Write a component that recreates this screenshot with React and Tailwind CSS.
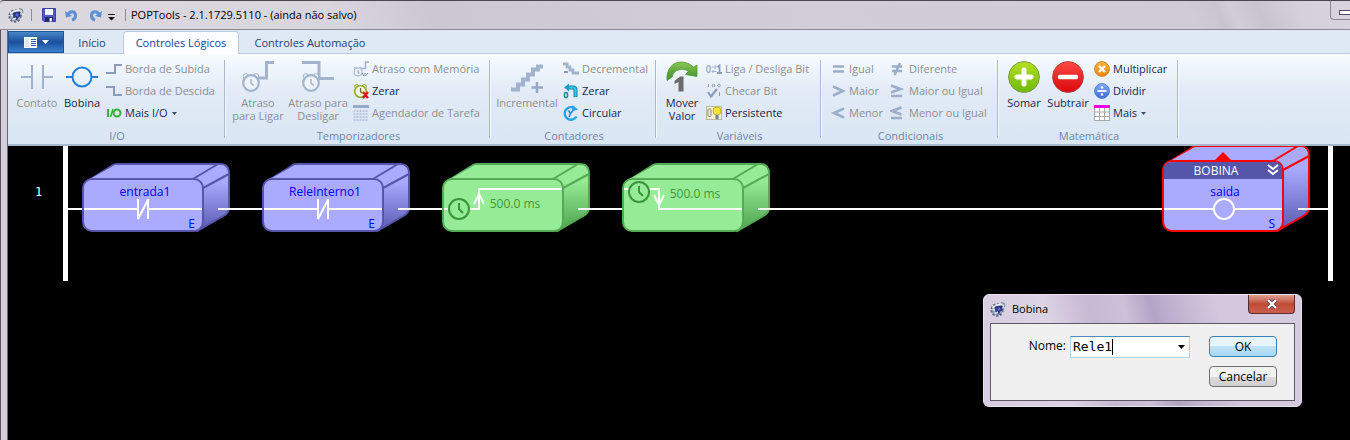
import React, { useState } from "react";

const MUTED = "#a3b3cd";

/* ---------- small drawings ---------- */

function Svg({ size = 16, children }) {
  return (
    <svg
      width={size}
      height={size}
      viewBox={`0 0 ${size} ${size}`}
      className="block shrink-0"
      fill="none"
      aria-hidden="true"
    >
      {children}
    </svg>
  );
}

const AppLogo = () => (
  <Svg>
    <circle cx="7" cy="9" r="5.5" fill="#8f9ab4" />
    <circle cx="7" cy="9" r="5.8" stroke="#5d6883" strokeWidth="1.8" strokeDasharray="2.2 1.6" />
    <path d="M5 5.5L12 4.5L12.5 9L9 13L5.5 11Z" fill="#2b3370" />
    <path d="M2.5 7Q5.5 3 12 3.5" stroke="#eef3f8" strokeWidth="1.6" />
    <path d="M2.500 8.500L5 9" stroke="#e8eef5" strokeWidth="1.4" />
    <circle cx="9" cy="8" r="1.7" fill="#5560e8" />
    <path d="M11 2Q15.500 1.500 14.5 6" stroke="#6f9a96" strokeWidth="1.2" />
    <path d="M4.500 12.500L8 11" stroke="#dbe3f0" strokeWidth="1.4" />
    <path d="M10 12L12 10" stroke="#a4b0c6" strokeWidth="1.4" />
  </Svg>
);

const SaveIcon = () => (
  <Svg>
    <path d="M1.500 1.500H14.500V14.500H3L1.500 13Z" fill="#5059c8" stroke="#3a429e" />
    <rect x="4" y="2" width="8" height="6" fill="#f2f5ff" />
    <rect x="4" y="10" width="8" height="4.500" fill="#22285e" />
    <rect x="8.500" y="11" width="2.500" height="3.500" fill="#e8ecff" />
  </Svg>
);

const UndoIcon = ({ flip }) => (
  <Svg>
    <g transform={flip ? "translate(16 0) scale(-1 1)" : undefined}>
      <path d="M4 7.500C6 3.500 11.500 4 11.500 8.500C11.500 11 10 12.500 8 13" stroke="#5b8fd6" strokeWidth="3" />
      <path d="M1 4L2 10.500L8 9Z" fill="#5b8fd6" />
    </g>
  </Svg>
);

const ContactIcon = () => (
  <Svg size={32}>
    <path d="M0 16H11M22 16H32" stroke={MUTED} strokeWidth="2" />
    <path d="M11 4V28M22 4V28" stroke={MUTED} strokeWidth="2" />
  </Svg>
);

const CoilIcon = () => (
  <Svg size={32}>
    <path d="M0 16H7M25 16H32" stroke="#1f7fdc" strokeWidth="2" />
    <circle cx="16" cy="16" r="9.500" stroke="#1f7fdc" strokeWidth="2" />
  </Svg>
);

const EdgeUp = () => (
  <Svg>
    <path d="M0 12H9V4H16" stroke="#8b9cba" strokeWidth="2" />
  </Svg>
);
const EdgeDown = () => (
  <Svg>
    <path d="M0 4H8V12H16" stroke="#8b9cba" strokeWidth="2" />
  </Svg>
);
const MoreIO = () => (
  <Svg>
    <path d="M2 4V12" stroke="#35b335" strokeWidth="2" />
    <path d="M4.5 12L7 4" stroke="#35b335" strokeWidth="1.6" />
    <circle cx="11" cy="8" r="3.5" stroke="#35b335" strokeWidth="2" />
  </Svg>
);

function Clock({ x, y, r, line = "#a3b3cd", face = "#eef3fa" }) {
  return (
    <g>
      <circle cx={x - r * 0.65} cy={y - r * 0.85} r={r * 0.35} fill={face} stroke={line} />
      <circle cx={x + r * 0.65} cy={y - r * 0.85} r={r * 0.35} fill={face} stroke={line} />
      <circle cx={x} cy={y} r={r} fill={face} stroke={line} strokeWidth={r * 0.28} />
      <path d={`M${x} ${y - r * 0.5}V${y}L${x + r * 0.35} ${y + r * 0.35}`} stroke={line} strokeWidth="1.4" />
    </g>
  );
}

const DelayOn = () => (
  <Svg size={32}>
    <path d="M16 17H24.500V1.500H32" stroke={MUTED} strokeWidth="3" />
    <Clock x={9} y={22} r={7.8} />
  </Svg>
);
const DelayOff = () => (
  <Svg size={32}>
    <path d="M0 1.500H17V17.500H32" stroke={MUTED} strokeWidth="3" />
    <Clock x={9} y={22} r={7.8} />
  </Svg>
);
const DelayMem = () => (
  <Svg>
    <path d="M8 7.500H12.500V1H16" stroke={MUTED} strokeWidth="1.6" />
    <Clock x={5} y={11} r={4} />
    <path d="M9 12L11 15M12 12V15M15 12L12.5 15" stroke="#7f8fac" />
  </Svg>
);
const ResetClock = () => (
  <Svg>
    <Clock x={7.5} y={8.5} r={5.8} line="#93ad2e" face="#f5f8dc" />
    <path d="M7.5 5V9L9 10" stroke="#5b6b34" />
    <path d="M10 9L15 15M15 9L10 15" stroke="#e01818" strokeWidth="2.2" />
  </Svg>
);
const Scheduler = () => (
  <Svg>
    <rect x="0" y="0" width="16" height="3" fill="#98a9c5" />
    <path d="M1.5 5V16M4.5 5V16M7.5 5V16M10.5 5V16M13.5 5V16" stroke="#b9c5da" strokeWidth="2" strokeDasharray="2 1" />
  </Svg>
);
const StairsUp = () => (
  <Svg size={32}>
    <path d="M0 28.500H7V23.500H12V18.500H17V13.500H22V8.500H27V5.500H32" stroke={MUTED} strokeWidth="4" />
    <path d="M26 21V32M20.500 26.500H32" stroke="#98a8c3" strokeWidth="2.5" />
  </Svg>
);
const StairsDown = () => (
  <Svg>
    <path d="M0 3H4V6H7V9H10V12H16" stroke={MUTED} strokeWidth="2.8" />
    <path d="M1 11H5" stroke="#8b9cba" strokeWidth="2" />
  </Svg>
);
const ResetCounter = () => (
  <Svg>
    <path d="M5 4.5H10Q12.500 4.5 12.500 7V14" stroke="#1689ad" strokeWidth="4" />
    <path d="M5 4.5H10Q12.500 4.5 12.500 7V13.500" stroke="#38c4e8" strokeWidth="2" />
    <path d="M1 4.5L6 0.5V8.5Z" fill="#1f9dc0" />
    <ellipse cx="3" cy="12" rx="1.6" ry="2.6" stroke="#178f95" strokeWidth="1.5" />
  </Svg>
);
const Circular = () => (
  <Svg>
    <path d="M12 3.5A6.3 6.3 0 1 0 13.5 11.5" stroke="#24a4ea" strokeWidth="2.4" />
    <path d="M9.5 0L15 4.5L9 6.5Z" fill="#24a4ea" />
    <path d="M5.5 5.5L7.5 8.5L10 5.5M7.5 8.5L6 12" stroke="#2b86cf" strokeWidth="1.6" />
  </Svg>
);
const MoveIcon = () => (
  <Svg size={32}>
    <defs>
      <linearGradient id="mv" x1="0" x2="0" y1="0" y2="1">
        <stop offset="0" stopColor="#8cc653" />
        <stop offset="1" stopColor="#3b8a2b" />
      </linearGradient>
    </defs>
    <path
      d="M1 19.500C0 8 7 1 15 1C20 1 24.500 3 27.500 6L31 4V15.500L19.500 13.500L22.500 10.500C17 6.500 8 8 6 16Z"
      fill="url(#mv)"
      stroke="#4d9a3a"
      strokeWidth="0.8"
    />
    <path d="M8.500 20L14 15.500H17.500V30.500H12.500V21L8.500 23Z" fill="#6b6b6b" />
  </Svg>
);
const ToggleBit = () => (
  <Svg>
    <ellipse cx="2.5" cy="8" rx="1.8" ry="3.5" stroke={MUTED} strokeWidth="1.4" />
    <path d="M5.500 6H10M8.500 4L10.500 6L8.500 8M10.500 10.500H6M7.500 9L6 10.500L7.500 12" stroke={MUTED} />
    <path d="M11.500 6L13.500 4.500V12M11 12H16" stroke="#8b9cba" strokeWidth="1.8" />
  </Svg>
);
const CheckBit = () => (
  <Svg>
    <path d="M2.500 1V4" stroke="#8b9cba" />
    <circle cx="7.500" cy="2.500" r="1.300" stroke="#8b9cba" />
    <circle cx="13" cy="2.500" r="1.300" stroke="#8b9cba" />
    <path d="M2 9L5 13.500L11 6" stroke="#8b9cba" strokeWidth="2.2" />
    <path d="M13.500 9V13" stroke="#8b9cba" />
  </Svg>
);
const Persistent = () => (
  <Svg>
    <rect x="0.5" y="1.500" width="15" height="13" fill="#f3f0d2" stroke="#b9b9a0" />
    <rect x="2" y="4" width="3" height="7.500" rx="1" stroke="#8a8a75" />
    <circle cx="11" cy="6" r="4" fill="#f3e23c" stroke="#c6b422" />
    <rect x="9.500" y="10" width="3" height="4" fill="#70809c" />
  </Svg>
);

const CMP = {
  eq: "M3 5.500H14M3 10.500H14",
  gt: "M3 3.500L13 8L3 12.500",
  lt: "M14 3.500L4 8L14 12.500",
  ne: "M2 5.500H12M2 10H12M10 2L4.500 14",
  ge: "M1 2.500L10.500 6L1 9.500M1 13H12",
  le: "M11.500 2.500L2 6L11.500 9.500M1 13H12",
};
const Compare = ({ kind }) => (
  <Svg>
    <path d={CMP[kind]} stroke="#9dadca" strokeWidth="2.6" />
  </Svg>
);

function Ball({ size, a, b, edge, id, children }) {
  const c = size / 2;
  return (
    <Svg size={size}>
      <defs>
        <linearGradient id={id} x1="0" x2="0" y1="0" y2="1">
          <stop offset="0" stopColor={a} />
          <stop offset="1" stopColor={b} />
        </linearGradient>
      </defs>
      <circle cx={c} cy={c} r={c - 0.6} fill={`url(#${id})`} stroke={edge} strokeWidth="1" />
      {children}
    </Svg>
  );
}
const Plus = () => (
  <Ball size={32} id="ball-plus" a="#b4e01e" b="#6fb90c" edge="#7a9a44">
    <path d="M16 9V23M9 16H23" stroke="#fff" strokeWidth="5" strokeLinecap="round" />
  </Ball>
);
const Minus = () => (
  <Ball size={32} id="ball-minus" a="#ff4a44" b="#d8060c" edge="#b44040">
    <path d="M8 16H24" stroke="#fff" strokeWidth="4.500" strokeLinecap="round" />
  </Ball>
);
const Times = () => (
  <Ball size={16} id="ball-times" a="#ffb43c" b="#f08206" edge="#cf8a30">
    <path d="M5 5L11 11M11 5L5 11" stroke="#fff" strokeWidth="2.400" />
  </Ball>
);
const Divide = () => (
  <Ball size={16} id="ball-divide" a="#86aef5" b="#3a6ae0" edge="#5b7fd0">
    <path d="M3.500 8H12.500" stroke="#fff" strokeWidth="1.800" />
    <circle cx="8" cy="4.500" r="1.200" fill="#fff" />
    <circle cx="8" cy="11.500" r="1.200" fill="#fff" />
  </Ball>
);
const TableIcon = () => (
  <Svg>
    <rect x="0.500" y="2.500" width="15" height="13" fill="#fff" stroke="#a9a9a9" />
    <path d="M5.500 3V16M10.500 3V16M0 7H16M0 11.500H16" stroke="#a9a9a9" />
    <rect x="0" y="0" width="16" height="3" fill="#f000e0" />
  </Svg>
);

const Caret = () => (
  <svg width="5" height="3" viewBox="0 0 5 3" className="ml-1 block" aria-hidden="true">
    <path d="M0 0H5L2.500 3Z" fill="#3c4a6a" />
  </svg>
);

/* ---------- ribbon ---------- */

function Big({ icon, lines, off, width }) {
  return (
    <button
      type="button"
      disabled={off}
      className={`flex shrink-0 flex-col items-center pt-[3px] text-[11px] leading-[13px] text-[#15294f] disabled:text-[#8d8f94] ${width}`}
    >
      {icon}
      <span className="mt-[3px] whitespace-nowrap">
        {lines.map((l) => (
          <span key={l} className="block">
            {l}
          </span>
        ))}
      </span>
    </button>
  );
}

function Small({ icon, label, off, menu }) {
  return (
    <button
      type="button"
      disabled={off}
      className="flex h-[22px] items-center text-[11px] whitespace-nowrap text-[#15294f] disabled:text-[#8d8f94]"
    >
      {icon}
      <span className="ml-[3px]">{label}</span>
      {menu && <Caret />}
    </button>
  );
}

const Stack = ({ children, className = "" }) => (
  <div className={`flex flex-col ${className}`}>{children}</div>
);

function Group({ title, width, children }) {
  return (
    <section
      aria-label={title}
      className={`relative flex h-full shrink-0 flex-col ${width}`}
    >
      <div className="flex h-[70px] pt-1">{children}</div>
      <h2 className="mt-1 text-center text-[11px] leading-4 text-[#7486a6]">{title}</h2>
      <span className="absolute top-1.5 right-0 h-[78px] w-0.5 border-l border-[#a9b9d3] bg-[#f6faff]" />
    </section>
  );
}

function Ribbon() {
  return (
    <div className="flex h-[92px] overflow-hidden border-b-2 border-[#a5b8cc] bg-linear-to-b from-[#f7fcff] via-[#e2ebf6] via-40% to-[#dae6f4]">
      <Group title="I/O" width="w-[218px]">
        <Big icon={<ContactIcon />} lines={["Contato"]} off width="ml-1.5 w-[46px]" />
        <Big icon={<CoilIcon />} lines={["Bobina"]} width="w-11" />
        <Stack className="ml-0.5">
          <Small icon={<EdgeUp />} label="Borda de Subida" off />
          <Small icon={<EdgeDown />} label="Borda de Descida" off />
          <Small icon={<MoreIO />} label="Mais I/O" menu />
        </Stack>
      </Group>
      <Group title="Temporizadores" width="w-[265px]">
        <Big icon={<DelayOn />} lines={["Atraso", "para Ligar"]} off width="ml-1 w-[56px]" />
        <Big icon={<DelayOff />} lines={["Atraso para", "Desligar"]} off width="w-[64px]" />
        <Stack className="ml-[3px]">
          <Small icon={<DelayMem />} label="Atraso com Memória" off />
          <Small icon={<ResetClock />} label="Zerar" />
          <Small icon={<Scheduler />} label="Agendador de Tarefa" off />
        </Stack>
      </Group>
      <Group title="Contadores" width="w-[166px]">
        <Big icon={<StairsUp />} lines={["Incremental"]} off width="ml-1 w-[64px]" />
        <Stack className="ml-1">
          <Small icon={<StairsDown />} label="Decremental" off />
          <Small icon={<ResetCounter />} label="Zerar" />
          <Small icon={<Circular />} label="Circular" />
        </Stack>
      </Group>
      <Group title="Variáveis" width="w-[165px]">
        <Big icon={<MoveIcon />} lines={["Mover", "Valor"]} width="ml-[3px] w-11" />
        <Stack className="ml-0.5">
          <Small icon={<ToggleBit />} label="Liga / Desliga Bit" off />
          <Small icon={<CheckBit />} label="Checar Bit" off />
          <Small icon={<Persistent />} label="Persistente" />
        </Stack>
      </Group>
      <Group title="Condicionais" width="w-[177px]">
        <Stack className="ml-2 w-[60px]">
          <Small icon={<Compare kind="eq" />} label="Igual" off />
          <Small icon={<Compare kind="gt" />} label="Maior" off />
          <Small icon={<Compare kind="lt" />} label="Menor" off />
        </Stack>
        <Stack>
          <Small icon={<Compare kind="ne" />} label="Diferente" off />
          <Small icon={<Compare kind="ge" />} label="Maior ou Igual" off />
          <Small icon={<Compare kind="le" />} label="Menor ou Igual" off />
        </Stack>
      </Group>
      <Group title="Matemática" width="w-[180px]">
        <Big icon={<Plus />} lines={["Somar"]} width="ml-1 w-[42px]" />
        <Big icon={<Minus />} lines={["Subtrair"]} width="w-[46px]" />
        <Stack className="ml-[3px]">
          <Small icon={<Times />} label="Multiplicar" />
          <Small icon={<Divide />} label="Dividir" />
          <Small icon={<TableIcon />} label="Mais" menu />
        </Stack>
      </Group>
    </div>
  );
}

/* ---------- window chrome ---------- */

function TitleBar() {
  return (
    <header className="flex h-[30px] items-center rounded-tl border-t border-b border-t-[#4c4650] border-b-[#8a8890] bg-[linear-gradient(65deg,#dcd8e0_0%,#d9d5dd_25%,#cdc7d2_32%,#d3cdd9_60%,#d1cbd6_88%,#cac4cf_90%,#d3cdd8_91%,#c9c3ce_93%,#d6d0db_96%,#d9d3de_100%)] pl-2">
      <AppLogo />
      <span className="ml-[7px] h-3 w-px bg-[#8f8b96]" />
      <div className="ml-[9px] flex items-center gap-[7px]">
        <button type="button" aria-label="Salvar"><SaveIcon /></button>
        <button type="button" aria-label="Desfazer"><UndoIcon /></button>
        <button type="button" aria-label="Refazer"><UndoIcon flip /></button>
      </div>
      <button type="button" aria-label="Personalizar" className="mt-1 ml-[5px]">
        <svg width="7" height="7" viewBox="0 0 7 7" className="block">
          <path d="M0 0H7V1H0ZM0 3H7L3.500 6.500Z" fill="#111" />
        </svg>
      </button>
      <span className="ml-[10px] h-3 w-px bg-[#8f8b96]" />
      <h1 className="ml-[5px] text-[11px] whitespace-nowrap text-black">
        POPTools - 2.1.1729.5110 - (ainda não salvo)
      </h1>
      <button
        type="button"
        aria-label="Minimizar"
        className="ml-auto flex h-[19px] w-5 items-center justify-end self-start rounded-bl border-b border-l border-[#8a8890] pt-1"
      >
        <span className="h-[5px] w-[11px] border border-r-0 border-[#4f4c66] bg-white" />
      </button>
    </header>
  );
}

function Tabs() {
  return (
    <nav className="flex h-6 border-b border-[#bdcbe2] bg-[#dfe9f5] text-[11px] text-[#1e3f73]">
      <button
        type="button"
        aria-label="Menu"
        className="mt-px flex w-14 items-center justify-center gap-[5px] border border-[#1d5592] bg-linear-to-b from-[#4a86c8] via-[#1b4f9c] via-50% to-[#3a83cf]"
      >
        <svg width="13" height="11" viewBox="0 0 13 11" className="block">
          <rect width="13" height="11" fill="#fff" />
          <rect x="1" y="1" width="4" height="9" fill="#dfe7f1" />
          <path d="M7 2.500H12M7 4.500H12M7 6.500H12M7 8.500H12" stroke="#2c5ea8" />
        </svg>
        <svg width="7" height="4" viewBox="0 0 7 4" className="block">
          <path d="M0 0H7L3.500 4Z" fill="#fff" />
        </svg>
      </button>
      <button type="button" className="mr-[3px] w-14 pt-[3px] text-center">Início</button>
      <button
        type="button"
        aria-current="page"
        className="mt-px -mb-px w-[116px] rounded-t border border-b-0 border-[#bdcbe2] bg-[#fbfdff] text-center text-[#1543a0]"
      >
        Controles Lógicos
      </button>
      <button type="button" className="w-[142px] pt-[3px] text-center">Controles Automação</button>
    </nav>
  );
}

/* ---------- ladder diagram ---------- */

const SKINS = {
  blue: { fill: "#aaaaff", edge: "#5555aa", dark: "#5a5ab0" },
  green: { fill: "#96eb96", edge: "#55aa55", dark: "#4fa34f" },
  red: { fill: "#aaaaff", edge: "#ff0000", dark: "#5a5ab0" },
};

function Block({ skin, top = 17, id, wireEnd = 180, children }) {
  const s = SKINS[skin];
  const back = top - 15;
  return (
    <svg
      width={wireEnd}
      height="90"
      viewBox={`0 -16 ${wireEnd} 90`}
      className="block shrink-0 text-[12px]"
      fill="none"
    >
      <defs>
        <linearGradient id={id} x1="0" x2="0" y1="0" y2="1">
          <stop offset="0.25" stopColor={s.fill} />
          <stop offset="1" stopColor={s.dark} />
        </linearGradient>
      </defs>
      <path
        d={`M7 ${top + 1}L31 ${back + 1}Q33 ${back} 36 ${back}H138Q147 ${back} 147 ${back + 10}V46Q147 50 143 53L115 69Z`}
        fill={`url(#${id})`}
        stroke={s.edge}
        strokeWidth="2"
      />
      <path
        d={`M8 ${top}L33 ${back + 1}H138Q146 ${back + 1} 146 ${back + 10}L121 ${top + 10}L112 ${top}Z`}
        fill={s.fill}
      />
      <path d={`M111 ${top}L136 ${back}M121 ${top + 9}L147 ${back + 10}`} stroke={s.edge} strokeWidth="2" />
      <rect x="1" y={top} width="120" height={69 - top} rx="9" fill={s.fill} stroke={s.edge} strokeWidth="2" />
      <path d={`M136 47H${wireEnd}`} stroke="#fff" strokeWidth="2" />
      {children}
    </svg>
  );
}

function Contact({ name, id }) {
  return (
    <Block skin="blue" id={id}>
      <text x="63" y="34" textAnchor="middle" fill="#0000ff">{name}</text>
      <text x="113" y="66" textAnchor="end" fill="#0000ff">E</text>
      <path d="M2 47H56M66 47H120M56 37V57M66 37V57M56 57L66 38" stroke="#fff" strokeWidth="2" />
    </Block>
  );
}

function Timer({ rising, id }) {
  const y = rising ? 47 : 30;
  return (
    <Block skin="green" id={id}>
      <path
        d={
          rising
            ? "M2 47H7M27 47H37V27H120M32 42L37 32L42 42"
            : "M2 27H7M27 27H37V47H120M32 33L37 43L42 33"
        }
        stroke="#fff"
        strokeWidth="2"
      />
      <circle cx="17" cy={y} r="10" fill="#96eb96" stroke="#3a963a" strokeWidth="2" />
      <path d={`M17 ${y - 6}V${y}L21 ${y + 4}`} stroke="#3a963a" strokeWidth="2" />
      <text x="73" y={rising ? 46 : 36} textAnchor="middle" fill="#3f973f">500.0 ms</text>
    </Block>
  );
}

function Coil() {
  return (
    <Block skin="red" top={-1} id="side-coil" wireEnd={166}>
      <path d="M2 17V8Q2 0 10 0H112Q120 0 120 8V17Z" fill="#5555aa" />
      <path d="M52 -1L61 -10L70 -1Z" fill="#ff0000" />
      <text x="54" y="13" textAnchor="middle" fill="#fff">BOBINA</text>
      <path d="M106 3L111 7L116 3M106 8L111 12L116 8" stroke="#fff" strokeWidth="2" />
      <text x="63" y="34" textAnchor="middle" fill="#0000ff">saida</text>
      <text x="113" y="66" textAnchor="end" fill="#0000ff">S</text>
      <path d="M2 47H52M72 47H120" stroke="#fff" strokeWidth="2" />
      <circle cx="62" cy="47" r="10" stroke="#fff" strokeWidth="2" />
    </Block>
  );
}

const Wire = ({ className }) => <span className={`mt-[62px] h-0.5 bg-white ${className}`} />;
const Rail = () => <span className="h-[135px] w-[5px] shrink-0 bg-white" />;

function Ladder() {
  return (
    <div className="flex pr-[17px]">
      <span className="w-[55px] shrink-0 pt-[38px] pl-[27px] font-['DejaVu_Sans_Mono',monospace] text-[12px] leading-4 text-white">1</span>
      <Rail />
      <Wire className="w-[14px] shrink-0" />
      <Contact name="entrada1" id="side-a" />
      <Contact name="ReleInterno1" id="side-b" />
      <Timer rising id="side-c" />
      <Timer id="side-d" />
      <Wire className="flex-1" />
      <Coil />
      <Rail />
    </div>
  );
}

/* ---------- dialog ---------- */

function CoilDialog() {
  const [name, setName] = useState("Rele1");
  return (
    <div
      role="dialog"
      aria-label="Bobina"
      className="absolute top-[294px] right-12 w-[319px] rounded-md border border-[#e9e2f0] bg-[linear-gradient(75deg,#d6cbe0_0%,#dcd3e5_25%,#c6b9d3_38%,#cdc0d9_48%,#b3a4c4_56%,#c0b2cf_62%,#d3c8de_75%,#d6cce0_100%)] px-1.5 pb-[5px]"
    >
      <div className="flex h-7 items-center">
        <AppLogo />
        <h2 className="ml-1.5 text-[11px] text-black">Bobina</h2>
        <button
          type="button"
          aria-label="Fechar"
          className="ml-auto flex h-[19px] w-[47px] items-center justify-center self-start rounded-b border border-t-0 border-[#5b2a30] bg-linear-to-b from-[#dba095] via-[#c04a36] via-50% to-[#c9604c]"
        >
          <svg width="12" height="10" viewBox="0 0 12 10" className="block">
            <path d="M2 1L10 9M10 1L2 9" stroke="#55484f" strokeWidth="4" />
            <path d="M2 1L10 9M10 1L2 9" stroke="#fff" strokeWidth="2.200" />
          </svg>
        </button>
      </div>
      <form
        className="flex h-[78px] items-start justify-end border border-[#5d5766] bg-[#f0f0f0] pt-3 pr-[17px] text-[12px] text-black"
        onSubmit={(e) => e.preventDefault()}
      >
        <label htmlFor="coil-name" className="mr-1 leading-5">Nome:</label>
        <div className="flex h-[22px] w-[120px] items-center border border-[#b5d3e8] border-t-[#4f8db8] bg-white">
          <input
            id="coil-name"
            value={name}
            onChange={(e) => setName(e.target.value)}
            size={5}
            className="field-sizing-content min-w-0 pl-0.5 font-['DejaVu_Sans_Mono',monospace] text-[13px] leading-4 outline-none"
          />
          <span className="h-4 w-px bg-black" />
          <button type="button" aria-label="Abrir lista" className="ml-auto px-1">
            <svg width="7" height="4" viewBox="0 0 7 4" className="block">
              <path d="M0 0H7L3.500 4Z" fill="#000" />
            </svg>
          </button>
        </div>
        <div className="ml-[19px] flex w-[68px] flex-col gap-[9px]">
          <button
            type="submit"
            className="h-[21px] rounded-sm border border-[#3c7fb1] bg-linear-to-b from-[#e6f4fc] from-50% via-[#bfe3f8] via-50% to-[#a5d8f5] leading-[18px]"
          >
            OK
          </button>
          <button
            type="button"
            className="h-[21px] rounded-sm border border-[#707070] bg-linear-to-b from-[#f2f2f2] from-50% via-[#dddddd] via-50% to-[#cfcfcf] leading-[18px]"
          >
            Cancelar
          </button>
        </div>
      </form>
    </div>
  );
}

export default function App() {
  return (
    <div className="relative flex min-h-screen flex-col overflow-hidden bg-[#d5cedb] font-['Open_Sans','Noto_Sans',sans-serif]">
      <TitleBar />
      <main className="flex flex-1 flex-col border-l border-[#5c5662] pl-1.5">
        <div className="flex flex-1 flex-col border-l border-[#6c6873] bg-black">
          <Tabs />
          <Ribbon />
          <Ladder />
        </div>
      </main>
      <CoilDialog />
    </div>
  );
}
